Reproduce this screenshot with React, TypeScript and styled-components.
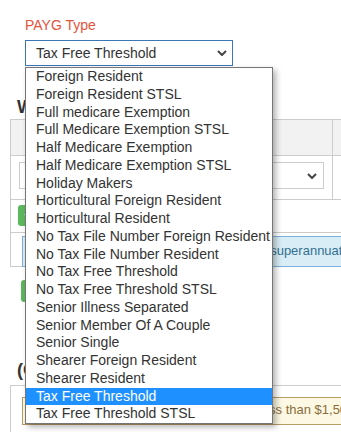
import React from "react";
import styled, { createGlobalStyle } from "styled-components";

const GlobalStyle = createGlobalStyle`
  html, body { margin: 0; padding: 0; background: #fff; overflow: hidden; }
  body {
    font-family: "Liberation Sans", Arial, sans-serif;
    font-size: 14px;
    color: #333;
  }
  * { box-sizing: border-box; }
`;

const Page = styled.div`
  padding: 15px 0 0 10px;
  width: 640px;
`;

const FormGroup = styled.div`
  margin-left: 15px;
  width: 208px;
`;

const Label = styled.div`
  color: #e4533c;
  line-height: 20px;
  margin-bottom: 5px;
`;

const SelectWrap = styled.div`
  position: relative;
`;

const SelectBox = styled.div<{ $focused?: boolean; $height: number }>`
  display: flex;
  align-items: center;
  justify-content: space-between;
  height: ${(p) => p.$height}px;
  border: 1px solid ${(p) => (p.$focused ? "#3a77b7" : "#ccc")};
  padding: 0 ${(p) => (p.$focused ? 5 : 6)}px 0 10px;
  background: #fff;
  color: #333;
  line-height: 20px;
  white-space: nowrap;
`;

const OptionList = styled.ul`
  position: absolute;
  top: calc(100% + 1px);
  left: 0;
  width: 248px;
  margin: 0;
  padding: 0;
  list-style: none;
  background: #fff;
  border: 1px solid #767676;
  box-shadow: 3px 3px 6px rgba(0, 0, 0, 0.3);
  z-index: 10;
`;

const Option = styled.li<{ $selected?: boolean }>`
  height: 17.75px;
  line-height: 17.75px;
  padding-left: 10px;
  white-space: nowrap;
  color: ${(p) => (p.$selected ? "#fff" : "#333")};
  background: ${(p) => (p.$selected ? "#1e90ff" : "transparent")};
`;

const SectionTitle = styled.h4<{ $mt: number; $mb: number }>`
  margin: ${(p) => p.$mt}px 0 ${(p) => p.$mb}px 7px;
  font-size: 18px;
  font-weight: bold;
  line-height: 20px;
  color: #333;
  white-space: nowrap;
`;

const Table = styled.div`
  display: grid;
  grid-template-columns: 322px 1fr;
  width: 600px;
  border-left: 1px solid #ccc;
  border-top: 1px solid #ccc;
`;

const Cell = styled.div<{
  $head?: boolean;
  $span?: boolean;
  $center?: boolean;
  $h: number;
  $pad: string;
}>`
  grid-column: ${(p) => (p.$span ? "1 / -1" : "auto")};
  height: ${(p) => p.$h}px;
  padding: ${(p) => p.$pad};
  border-right: 1px solid #ccc;
  border-bottom: 1px solid #ccc;
  background: ${(p) => (p.$head ? "#f2f2f2" : "#fff")};
  font-weight: ${(p) => (p.$head ? "bold" : "normal")};
  text-align: ${(p) => (p.$center ? "center" : "left")};
  line-height: 20px;
  white-space: nowrap;
`;

const AddButton = styled.button<{ $h: number; $ml?: number; $mt?: number }>`
  display: block;
  height: ${(p) => p.$h}px;
  margin: ${(p) => p.$mt ?? 0}px 0 0 ${(p) => p.$ml ?? 0}px;
  padding: 0 6px;
  border: none;
  border-radius: 3px;
  background: #5cb85c;
  color: #fff;
  font-family: inherit;
  font-size: 12px;
  line-height: ${(p) => p.$h}px;
`;

const Alert = styled.div<{ $kind: "info" | "warning"; $pad: string }>`
  display: flex;
  align-items: center;
  gap: 6px;
  padding: ${(p) => p.$pad};
  font-size: 13px;
  line-height: 18.57px;
  white-space: nowrap;
  border: 1px solid ${(p) => (p.$kind === "info" ? "#7fb0db" : "#b89b66")};
  background: ${(p) => (p.$kind === "info" ? "#d9edf7" : "#fcf8e3")};
  color: ${(p) => (p.$kind === "info" ? "#31708f" : "#8a6d3b")};

  svg {
    flex: none;
  }
`;

const Chevron = () => (
  <svg width="10" height="6" viewBox="0 0 10 6" aria-hidden="true">
    <polyline points="1,1 5,5 9,1" fill="none" stroke="#444" strokeWidth="2" />
  </svg>
);

const InfoIcon = () => (
  <svg width="14" height="14" viewBox="0 0 14 14" aria-hidden="true">
    <circle cx="7" cy="7" r="6.5" fill="#31708f" />
    <rect x="6.1" y="6" width="1.8" height="5" fill="#fff" />
    <circle cx="7" cy="3.9" r="1.1" fill="#fff" />
  </svg>
);

const WarnIcon = () => (
  <svg width="14" height="14" viewBox="0 0 14 14" aria-hidden="true">
    <path d="M7 1 L13.5 13 H0.5 Z" fill="#8a6d3b" />
    <rect x="6.2" y="5" width="1.6" height="4.5" fill="#fff" />
    <rect x="6.2" y="10.4" width="1.6" height="1.6" fill="#fff" />
  </svg>
);

const options = [
  "Foreign Resident",
  "Foreign Resident STSL",
  "Full medicare Exemption",
  "Full Medicare Exemption STSL",
  "Half Medicare Exemption",
  "Half Medicare Exemption STSL",
  "Holiday Makers",
  "Horticultural Foreign Resident",
  "Horticultural Resident",
  "No Tax File Number Foreign Resident",
  "No Tax File Number Resident",
  "No Tax Free Threshold",
  "No Tax Free Threshold STSL",
  "Senior Illness Separated",
  "Senior Member Of A Couple",
  "Senior Single",
  "Shearer Foreign Resident",
  "Shearer Resident",
  "Tax Free Threshold",
  "Tax Free Threshold STSL",
];

const selected = "Tax Free Threshold";

export default function App() {
  return (
    <>
      <GlobalStyle />
      <Page>
        <FormGroup>
          <Label>PAYG Type</Label>
          <SelectWrap>
            <SelectBox $focused $height={26}>
              <span>{selected}</span>
              <Chevron />
            </SelectBox>
            <OptionList>
              {options.map((o) => (
                <Option key={o} $selected={o === selected}>
                  {o}
                </Option>
              ))}
            </OptionList>
          </SelectWrap>
        </FormGroup>

        <SectionTitle $mt={31} $mb={2}>Wages &amp; Allowances</SectionTitle>
        <Table>
          <Cell $head $center $h={36} $pad="7px 8px">Earning Type</Cell>
          <Cell $head $h={36} $pad="7px 20px">Amount</Cell>
          <Cell $h={44} $pad="6px 8px 0">
            <SelectBox $height={27}>
              <span>Ordinary Hours</span>
              <Chevron />
            </SelectBox>
          </Cell>
          <Cell $h={44} $pad="6px 10px 0" />
          <Cell $span $h={33} $pad="5px 7px 0">
            <AddButton $h={21}>+ Add Earning</AddButton>
          </Cell>
          <Cell $span $h={34} $pad="3px 11px 0">
            <Alert $kind="info" $pad="5px 7px">
              <InfoIcon />
              <span>Note: This employee is not eligible for superannuation guarantee contributions.</span>
            </Alert>
          </Cell>
        </Table>

        <AddButton $h={22} $ml={11} $mt={13}>+ Add Allowance</AddButton>

        <SectionTitle $mt={58} $mb={5}>(Optional) Superannuation</SectionTitle>
        <Table>
          <Cell $span $h={48} $pad="11px 11px 0">
            <Alert $kind="warning" $pad="3px 10px 4px">
              <WarnIcon />
              <span>Gross earnings for this month were less than $1,500 this pay period.</span>
            </Alert>
          </Cell>
        </Table>
      </Page>
    </>
  );
}
